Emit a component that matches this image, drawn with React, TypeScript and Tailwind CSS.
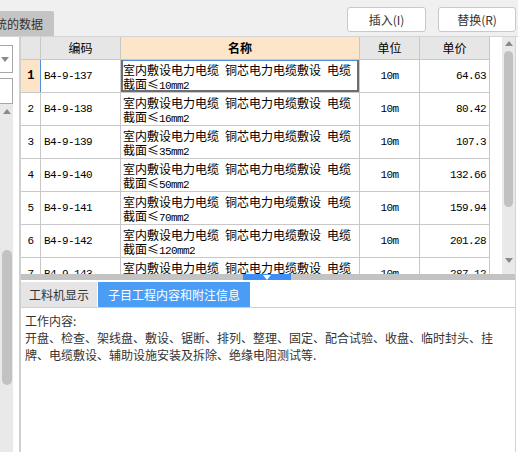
import React from 'react';

const rows = [
  { n: '1', code: 'B4-9-137', spec: '10', price: '64.63' },
  { n: '2', code: 'B4-9-138', spec: '16', price: '80.42' },
  { n: '3', code: 'B4-9-139', spec: '35', price: '107.3' },
  { n: '4', code: 'B4-9-140', spec: '50', price: '132.66' },
  { n: '5', code: 'B4-9-141', spec: '70', price: '159.94' },
  { n: '6', code: 'B4-9-142', spec: '120', price: '201.28' },
  { n: '7', code: 'B4-9-143', spec: '', price: '287.12' },
];

const mono = "font-['Liberation_Mono',monospace] text-[11px] tracking-[-0.6px]";

function Up({ className = '' }: { className?: string }) {
  return (
    <svg width="8" height="5" viewBox="0 0 8 5" className={className}>
      <polygon points="0,5 8,5 4,0" fill="#8a8a8a" />
    </svg>
  );
}

function Down({ className = '', color = '#8a8a8a' }: { className?: string; color?: string }) {
  return (
    <svg width="8" height="5" viewBox="0 0 8 5" className={className}>
      <polygon points="0,0 8,0 4,5" fill={color} />
    </svg>
  );
}

export default function App() {
  return (
    <div className="w-[518px] h-[452px] overflow-hidden bg-white font-['Noto_Sans_CJK_SC',sans-serif] text-black">
      {/* top toolbar */}
      <div className="h-[37px] bg-[#f0f0f0] border-b border-[#d4d4d4] flex justify-between">
        <div className="self-end h-[25px] w-[54px] bg-[#c4c4c4] overflow-hidden rounded-tr-[2px]">
          <div className="ml-[-5px] whitespace-nowrap text-[12px] leading-[25px] text-[#333]">统的数据</div>
        </div>
        <div className="flex gap-[12px] mt-[7px] mr-[2px] h-[25px]">
          <button className="w-[79px] h-[25px] bg-white border border-[#c9c9c9] rounded-[3px] text-[12px] text-[#333]">插入(I)</button>
          <button className="w-[78px] h-[25px] bg-white border border-[#c9c9c9] rounded-[3px] text-[12px] text-[#333]">替换(R)</button>
        </div>
      </div>

      <div className="flex h-[415px]">
        {/* left strip */}
        <div className="w-[19px] flex flex-col">
          <div className="h-[8px]" />
          <div className="w-[13px] h-[28px] bg-white border-y border-r border-[#a8a8a8] flex items-center pl-[1px]">
            <Down />
          </div>
          <div className="h-[5px]" />
          <div className="w-[13px] h-[26px] bg-white border-y border-r border-[#a8a8a8]" />
          <div className="w-[13px] flex-1 bg-[#e9e9e9] flex flex-col items-center">
            <Up className="mt-[5px]" />
            <div className="mt-[136px] w-[10px] h-[135px] rounded-[5px] bg-[#c2c2c2]" />
          </div>
        </div>
        <div className="w-[2px] bg-[#d0d0d0]" />

        {/* center */}
        <div className="w-[494px] flex flex-col">
          <div className="h-[237px] flex overflow-hidden">
            <div className="w-[469px] flex flex-col">
              <div className="flex h-[23px] shrink-0 border-b border-[#c8c8c8] bg-[#e6e6e6] text-[12px]">
                <div className="w-[20px] border-r border-[#c8c8c8]" />
                <div className="w-[80px] border-r border-[#c8c8c8] flex items-center justify-center">编码</div>
                <div className="w-[239px] border-r border-[#c8c8c8] bg-[#fde5c9] flex items-center justify-center font-bold">名称</div>
                <div className="w-[60px] border-r border-[#c8c8c8] flex items-center justify-center">单位</div>
                <div className="w-[70px] border-r border-[#c8c8c8] flex items-center justify-center">单价</div>
              </div>
              {rows.map((r, i) => {
                const sel = i === 0;
                return (
                  <div key={r.n} className="flex h-[33px] shrink-0 border-b border-[#c8c8c8]">
                    <div
                      className={`w-[20px] border-r flex items-center justify-center ${mono} ${
                        sel ? 'bg-[#fde4c6] border-[#4a90e2] font-bold text-[12px]' : 'border-[#c8c8c8]'
                      }`}
                    >
                      {r.n}
                    </div>
                    <div className={`w-[80px] border-r border-[#c8c8c8] flex items-center pl-[3px] ${mono}`}>{r.code}</div>
                    <div
                      className={`w-[239px] border-r border-[#c8c8c8] pl-[2px] pt-[3px] text-[12px] leading-[14px] whitespace-nowrap ${
                        sel ? 'shadow-[inset_2px_0_0_#6e6e6e,inset_-2px_-2px_0_#6e6e6e,inset_0_1px_0_#4a90e2] pt-[1px]' : ''
                      }`}
                    >
                      <div>
                        室内敷设电力电缆<span className="inline-block w-[6px]" />铜芯电力电缆敷设<span className="inline-block w-[6px]" />电缆
                      </div>
                      {r.spec && (
                        <div>
                          截面≤<span className={mono}>{r.spec}mm2</span>
                        </div>
                      )}
                    </div>
                    <div className={`w-[60px] border-r border-[#c8c8c8] flex items-center justify-center ${mono}`}>10m</div>
                    <div className={`w-[70px] border-r border-[#c8c8c8] flex items-center justify-end pr-[3px] ${mono}`}>{r.price}</div>
                  </div>
                );
              })}
            </div>
            <div className="w-[12px]" />
            <div className="w-[13px] bg-[#e9e9e9] flex flex-col items-center">
              <Up className="mt-[4px]" />
              <div className="mt-[5px] w-[9px] h-[156px] rounded-[5px] bg-[#c1c1c1]" />
              <Down className="mt-[51px]" />
            </div>
          </div>

          {/* horizontal bar */}
          <div className="h-[6px] bg-[#c3c3c3] flex">
            <div className="ml-[222px] w-[48px] h-[6px] bg-[#3d8ef5] flex justify-center">
              <Down color="#ffffff" className="mt-[1px]" />
            </div>
          </div>

          {/* bottom panel */}
          <div className="flex-1 flex flex-col">
            <div className="h-[28px] pt-[2px] flex gap-[1px] border-b border-[#d0d0d0] text-[12px]">
              <div className="h-[25px] px-[8px] bg-[#e5e5e5] text-[#333] leading-[25px]">工料机显示</div>
              <div className="h-[25px] px-[10px] bg-[#4a9cf5] text-white leading-[25px]">子目工程内容和附注信息</div>
            </div>
            <div className="pt-[4px] pl-[4px] text-[12px] leading-[17px] text-[#333] whitespace-nowrap">
              <div>工作内容:</div>
              <div>开盘、检查、架线盘、敷设、锯断、排列、整理、固定、配合试验、收盘、临时封头、挂</div>
              <div>牌、电缆敷设、辅助设施安装及拆除、绝缘电阻测试等.</div>
            </div>
          </div>
        </div>
        <div className="w-px bg-[#d4d4d4]" />
      </div>
    </div>
  );
}
